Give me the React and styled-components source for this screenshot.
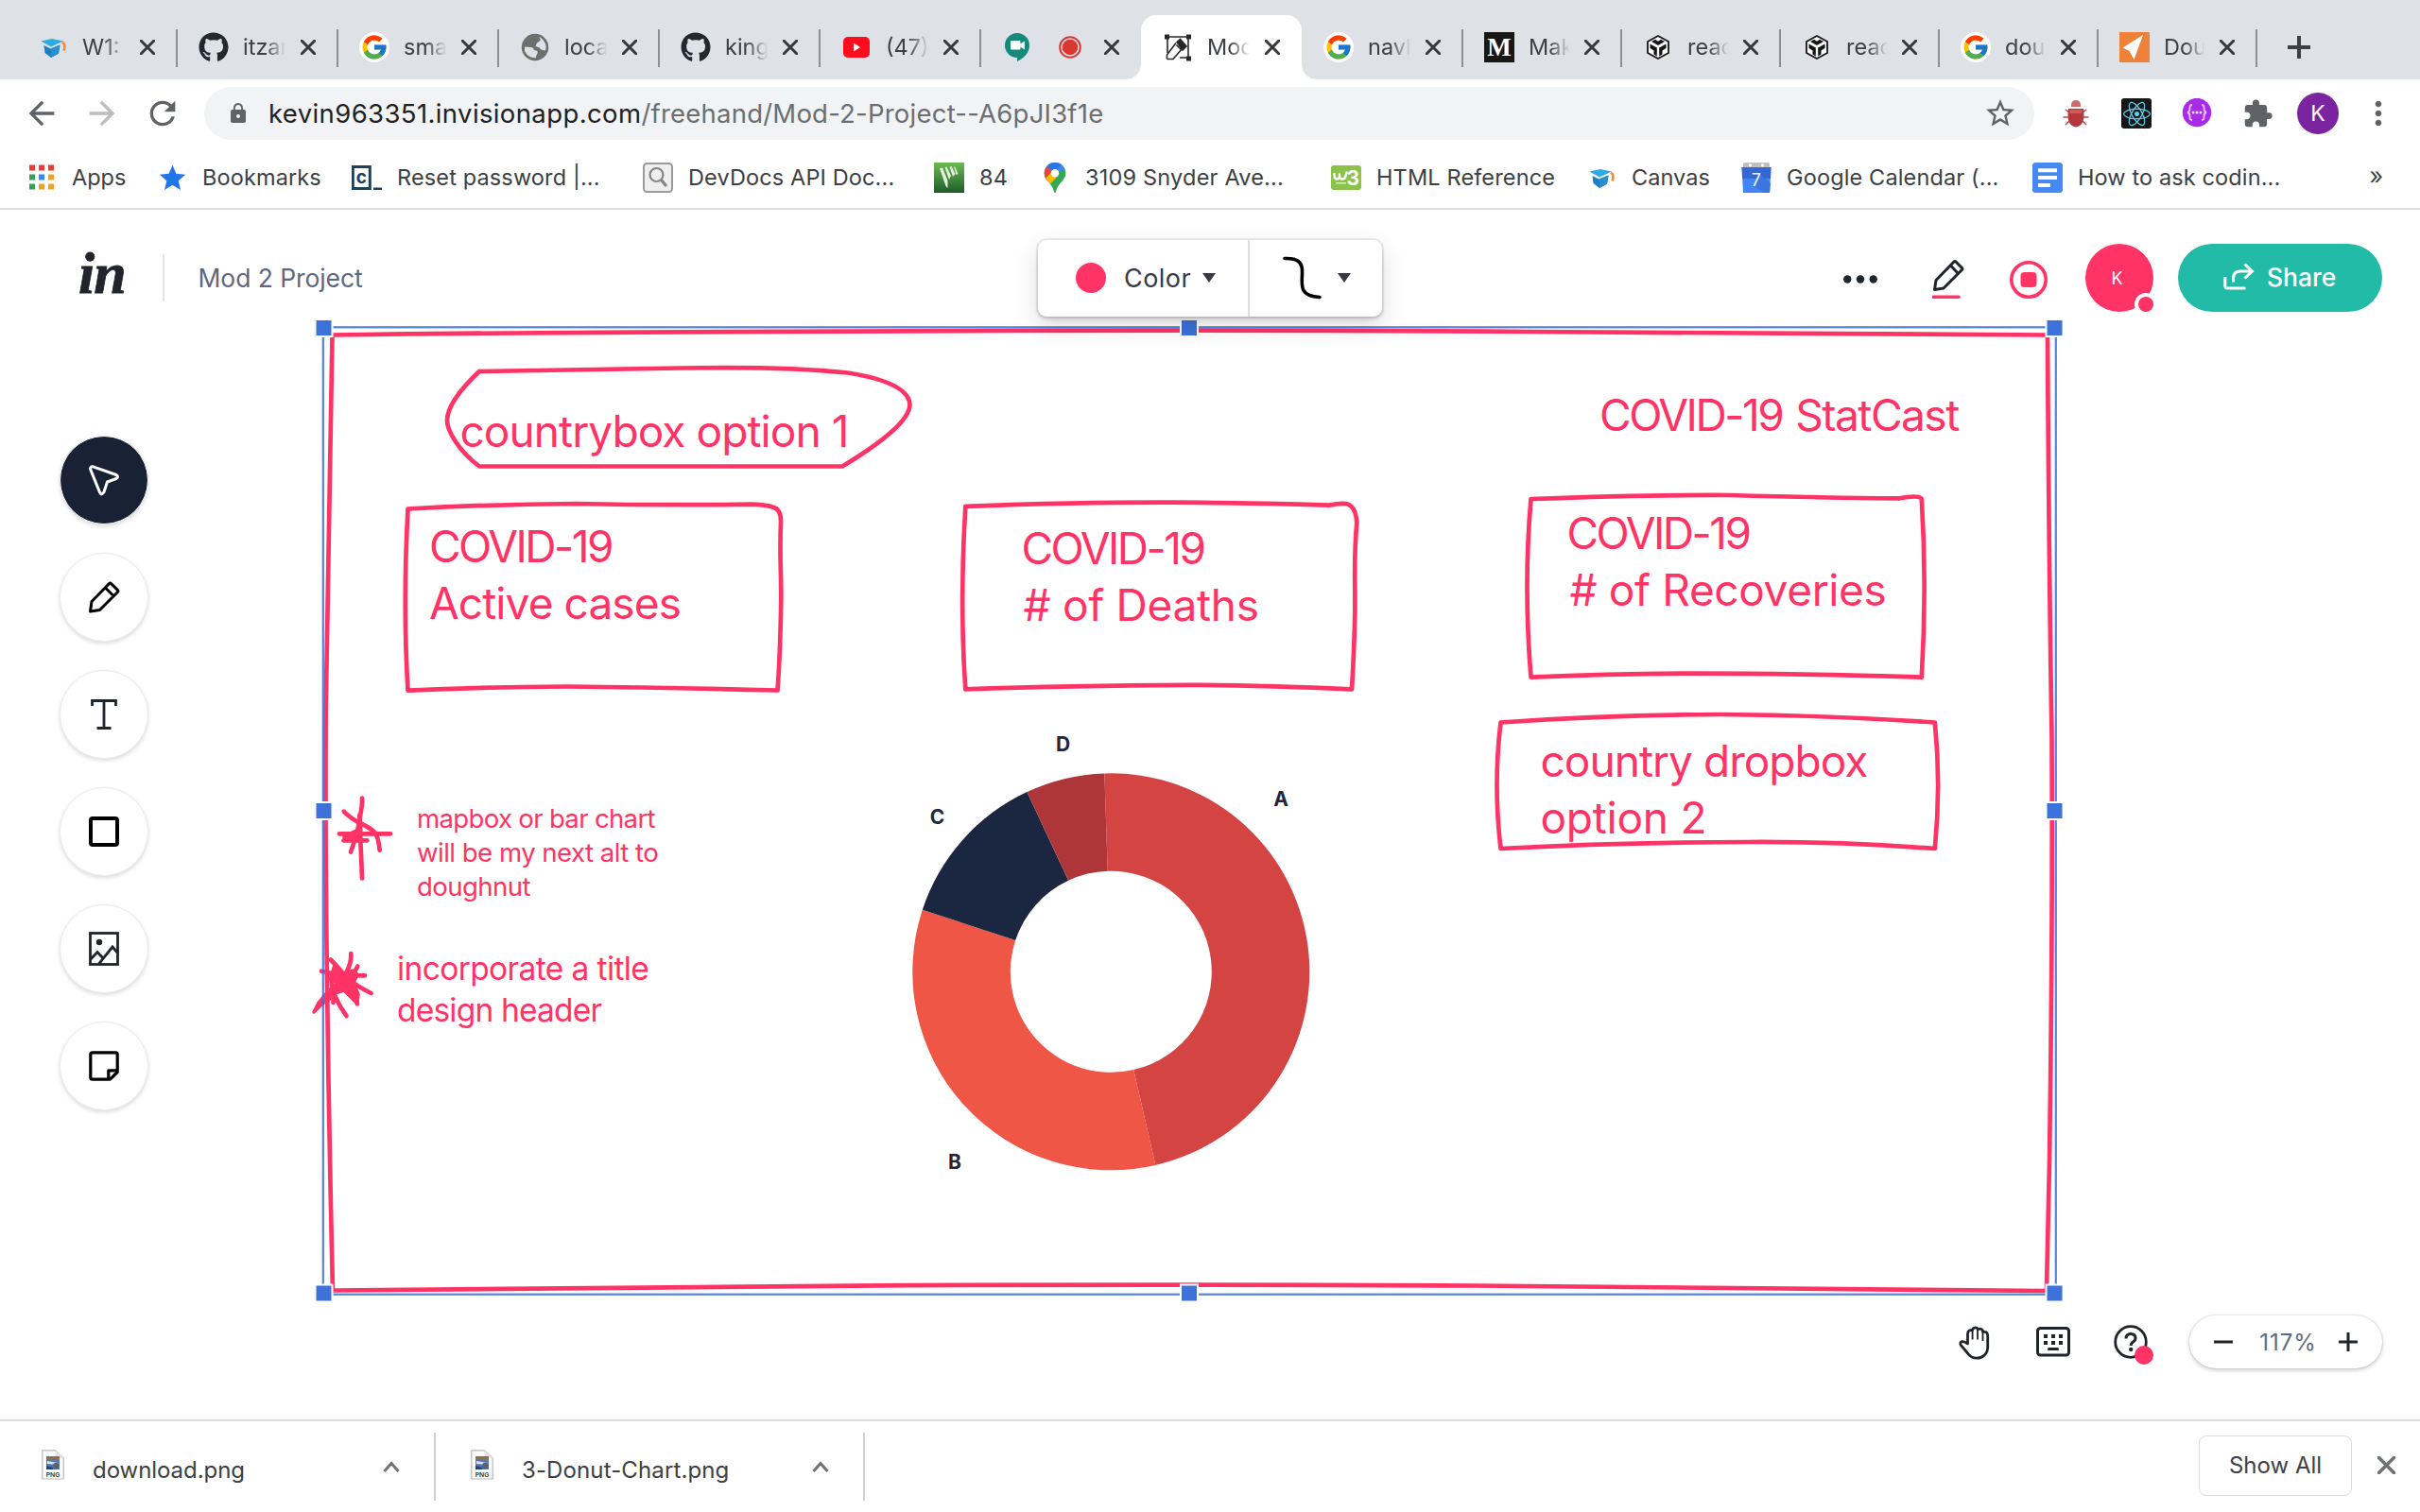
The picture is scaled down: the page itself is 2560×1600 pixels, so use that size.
import React from 'react';
import styled, { createGlobalStyle, css } from 'styled-components';
import {
  MdArrowBack, MdArrowForward, MdRefresh, MdLock, MdStarBorder, MdExtension, MdMoreVert, MdStar,
} from 'react-icons/md';
import { FaGithub, FaReact } from 'react-icons/fa';
import { FcGoogle } from 'react-icons/fc';

const PINK = '#ff3366';
const BLUE = '#3c72da';
const INK = '#20242c';

const GlobalStyle = createGlobalStyle`
  *, *::before, *::after { box-sizing: border-box; }
  body {
    margin: 0;
    background: #fff;
    font-family: "Inter", "Liberation Sans", sans-serif;
    color: #3c4043;
    overflow: hidden;
  }
  svg { display: block; flex: none; }
`;

const Window = styled.div`
  width: 2560px;
  height: 1600px;
  display: flex;
  flex-direction: column;
  background: #fff;
`;

/* ---------- tab strip ---------- */

const TabStrip = styled.div`
  height: 84px;
  padding: 16px 0 0 17px;
  display: flex;
  background: #dee1e6;
`;

const Tab = styled.div`
  position: relative;
  width: ${(p) => p.$width}px;
  padding: 0 23px 0 23px;
  display: flex;
  align-items: center;
  ${(p) => p.$divider && css`
    &::after {
      content: '';
      position: absolute;
      right: -1px;
      top: 15px;
      width: 2px;
      height: 40px;
      background: #8b8e93;
    }
  `}
  ${(p) => p.$active && css`
    background: #fff;
    border-radius: 16px 16px 0 0;
    &::before, &::after {
      content: '';
      position: absolute;
      bottom: 0;
      width: 16px;
      height: 16px;
    }
    &::before {
      left: -16px;
      background: radial-gradient(circle at 0 0, #dee1e6 15.5px, #fff 16px);
    }
    &::after {
      right: -16px;
      background: radial-gradient(circle at 100% 0, #dee1e6 15.5px, #fff 16px);
    }
  `}
`;

const IconSlot = styled.span`
  flex: none;
  width: ${(p) => p.$width || 32}px;
  height: 32px;
  display: flex;
  align-items: center;
  justify-content: center;
  color: ${(p) => p.$color || '#5f6368'};
`;

const TabTitle = styled.span`
  flex: 1;
  min-width: 0;
  margin: 0 16px 0 15px;
  overflow: hidden;
  white-space: nowrap;
  font-size: 23.5px;
  line-height: 32px;
  mask-image: linear-gradient(90deg, #000 52%, transparent 101%);
`;

const TabMedia = styled.span`
  flex: 1;
  padding-left: 28px;
`;

const NewTab = styled.div`
  width: 90px;
  display: flex;
  align-items: center;
  justify-content: center;
`;

const WhiteDisc = styled.span`
  width: 32px;
  height: 32px;
  border-radius: 50%;
  background: #fff;
  display: flex;
  align-items: center;
  justify-content: center;
`;

const BlackTile = styled.span`
  width: 32px;
  height: 32px;
  border-radius: ${(p) => p.$radius || 0}px;
  background: #181716;
  color: ${(p) => p.$color || '#fff'};
  font: bold 27px/32px "Liberation Serif", serif;
  display: flex;
  align-items: center;
  justify-content: center;
`;

/* ---------- toolbar ---------- */

const Toolbar = styled.div`
  height: 72px;
  padding: 0 28px;
  display: flex;
  align-items: center;
  gap: 32px;
`;

const AddressBar = styled.div`
  width: 1936px;
  height: 56px;
  margin: 0 -4px;
  padding: 0 18px 0 24px;
  border-radius: 28px;
  background: #f1f3f4;
  display: flex;
  align-items: center;
`;

const Url = styled.span`
  flex: 1;
  margin-left: 20px;
  font-size: 27.5px;
  line-height: 36px;
  letter-spacing: 0.22px;
  color: #6b6e72;
`;

const Domain = styled.span`
  letter-spacing: 0.38px;
  color: #202124;
`;

const Profile = styled.span`
  width: 44px;
  height: 44px;
  margin: 0 -6px;
  border-radius: 50%;
  background: #7a259f;
  color: #fff;
  font-size: 23px;
  line-height: 44px;
  text-align: center;
`;

/* ---------- bookmarks ---------- */

const BookmarkBar = styled.div`
  height: 66px;
  padding-left: 28px;
  border-bottom: 2px solid #dddee4;
  display: flex;
  align-items: center;
`;

const Bookmark = styled.div`
  width: ${(p) => p.$width}px;
  display: flex;
  align-items: center;
  gap: 16px;
  font-size: 23.5px;
  line-height: 32px;
  letter-spacing: ${(p) => p.$spacing}px;
  white-space: nowrap;
`;

const Overflow = styled.span`
  margin-left: auto;
  padding: 0 39px 4px 0;
  font-size: 25px;
`;

/* ---------- freehand app ---------- */

const Freehand = styled.main`
  position: relative;
  flex: 1;
  display: flex;
  flex-direction: column;
`;

const Board = styled.div`
  position: absolute;
  inset: 0;
`;

const Note = styled.div`
  position: absolute;
  left: ${(p) => p.$x}px;
  top: ${(p) => p.$y}px;
  font-size: ${(p) => p.$size}px;
  line-height: ${(p) => p.$leading}px;
  color: ${PINK};
  white-space: nowrap;
`;

const Line = styled.div`
  padding-left: ${(p) => p.$indent || 0}px;
`;

const Run = styled.span`
  letter-spacing: ${(p) => p.$spacing}px;
  white-space: pre;
`;

const Header = styled.header`
  position: relative;
  height: 144px;
  padding: 0 40px 0 83px;
  display: grid;
  grid-template-columns: 1fr auto 1fr;
  align-items: center;
`;

const Brand = styled.div`
  display: flex;
  align-items: center;
`;

const DocTitle = styled.span`
  margin-left: 35.5px;
  font-size: 26.5px;
  line-height: 36px;
  letter-spacing: -0.08px;
  color: #5f677f;
`;

const Rule = styled.span`
  width: 2px;
  height: 50px;
  margin-left: 38px;
  background: #e2e3e6;
`;

const StylePanel = styled.div`
  width: 364px;
  height: 81px;
  margin-right: 43px;
  border-radius: 9px;
  background: #fff;
  box-shadow: 0 0 0 2px rgba(0, 0, 0, 0.07), 0 3px 4px rgba(0, 0, 0, 0.12), 0 10px 26px rgba(0, 0, 0, 0.15);
  display: flex;
`;

const StyleOption = styled.div`
  width: ${(p) => p.$width}px;
  padding-left: ${(p) => p.$pad}px;
  display: flex;
  align-items: center;
  font-size: 27px;
  letter-spacing: 0.46px;
  color: #363a45;
  & + & { border-left: 2px solid #dddfe5; }
`;

const Swatch = styled.span`
  width: 32px;
  height: 32px;
  margin-right: 19px;
  border-radius: 50%;
  background: ${PINK};
`;

const Caret = styled.span`
  margin-left: ${(p) => p.$gap}px;
  border: 7px solid transparent;
  border-top: 10px solid #363a45;
  border-bottom: 0;
`;

const Actions = styled.div`
  display: flex;
  align-items: center;
  justify-content: flex-end;
`;

const Action = styled.span`
  margin-right: ${(p) => p.$gap}px;
`;

const Avatar = styled.span`
  position: relative;
  width: 72px;
  height: 72px;
  margin-right: 26px;
  border-radius: 50%;
  background: ${PINK};
  color: #fff;
  font-size: 18px;
  line-height: 73px;
  text-align: center;
  padding-right: 5px;
  &::after {
    content: '';
    position: absolute;
    right: 0;
    bottom: 0;
    width: 16px;
    height: 16px;
    border-radius: 50%;
    background: ${PINK};
    box-shadow: 0 0 0 4px #fff;
  }
`;

const ShareButton = styled.button`
  width: 216px;
  height: 72px;
  padding: 0 0 3px 48px;
  border: 0;
  border-radius: 36px;
  background: #22bba7;
  color: #fff;
  font: 500 26.5px "Inter", sans-serif;
  display: flex;
  align-items: center;
  gap: 13px;
`;

const ToolRail = styled.nav`
  position: relative;
  flex: 1;
  padding: 95px 0 0 63px;
  display: flex;
  flex-direction: column;
  align-items: flex-start;
  gap: 30px;
`;

const Tool = styled.button`
  width: 94px;
  height: 94px;
  padding: 0;
  border: 1px solid ${(p) => (p.$active ? '#fff' : '#ebebeb')};
  border-radius: 50%;
  background: ${(p) => (p.$active ? '#182234' : '#fff')};
  box-shadow: 0 2px 4px rgba(0, 0, 0, 0.14);
  display: flex;
  align-items: center;
  justify-content: center;
`;

const Footer = styled.div`
  position: relative;
  height: 164px;
  padding-right: 40px;
  display: flex;
  align-items: center;
  justify-content: flex-end;
`;

const ZoomPill = styled.div`
  width: 204px;
  height: 56px;
  padding: 0 26px;
  border-radius: 28px;
  background: #fff;
  box-shadow: 0 0 2px rgba(0, 0, 0, 0.22), 0 2px 5px rgba(0, 0, 0, 0.2);
  display: flex;
  align-items: center;
  justify-content: space-between;
  font-size: 24px;
  letter-spacing: 0.9px;
  color: #626a80;
`;

const ZoomLevel = styled.span`
  padding-left: 5px;
`;

/* ---------- downloads ---------- */

const Shelf = styled.div`
  height: 98px;
  border-top: 2px solid #dddee1;
  padding: 0 26px 0 0;
  display: flex;
  align-items: center;
`;

const Download = styled.div`
  width: ${(p) => p.$width}px;
  height: 72px;
  padding: 0 36px 0 ${(p) => p.$pad}px;
  border-right: 2px solid #d0d1d3;
  display: flex;
  align-items: center;
`;

const FileIcon = styled.span`
  padding-bottom: 5px;
`;

const FileName = styled.span`
  flex: 1;
  padding: 6px 0 0 30px;
  font-size: 24px;
  letter-spacing: ${(p) => p.$spacing}px;
`;

const ShowAll = styled.button`
  width: 162px;
  height: 64px;
  margin: 0 27px 2px auto;
  padding: 0 0 2px;
  border: 1.5px solid #d9dbdf;
  border-radius: 8px;
  background: #fff;
  color: #3c4043;
  font: 24px "Inter", sans-serif;
`;

const CloseShelf = styled.span`
  padding-bottom: 3px;
`;

/* ---------- icons ---------- */

const Cross = ({ size = 16, color = '#35383c', weight = 3 }) => (
  <svg width={size} height={size} viewBox="0 0 16 16" stroke={color} strokeWidth={weight * 16 / size} strokeLinecap="round">
    <path d="M1.3 1.3 14.7 14.7M14.7 1.3 1.3 14.7" />
  </svg>
);

const CanvasHat = () => (
  <svg width="32" height="32" viewBox="0 0 32 32">
    <path d="M6.500 14 13.500 17.500 23.500 13.500 22 22.500 14 27 7.500 22Z" fill="#1b7fc6" />
    <path d="M14 17.500 23.500 13.500 22 22.500 14 27Z" fill="#2a8fd2" />
    <path d="M3.300 9.500 15 7 27 9.500 14 15.500Z" fill="#2babe2" />
    <path d="M26 10.500Q30 13.500 27.500 19.500" fill="none" stroke="#f08a3c" strokeWidth="2.600" />
  </svg>
);

const GoogleBadge = () => <WhiteDisc><FcGoogle size={30} /></WhiteDisc>;

const Globe = () => (
  <svg width="32" height="32" viewBox="0 0 32 32">
    <circle cx="16" cy="16" r="14.200" fill="#6e6e6e" />
    <path d="M5 15.500 12 16Q14.500 16.500 15 19L18.500 20Q19.500 22.500 17.500 24.500L16.500 27.500Q8 27 5 20Z" fill="#dee1e6" />
    <path d="M19.500 4.800Q22 6 21.500 9L18 11.500 16.500 15 20 16 22.500 18.500 27 19.500Q28.500 14 26 10.500Q23.500 6 19.500 4.800Z" fill="#dee1e6" />
  </svg>
);

const YouTube = () => (
  <svg width="32" height="32" viewBox="0 0 32 32">
    <rect x="2" y="5" width="28" height="22" rx="5" fill="#fe0b1d" />
    <path d="M13 11.500 20 16 13 20.500Z" fill="#fff" />
  </svg>
);

const Meet = () => (
  <svg width="32" height="32" viewBox="0 0 32 32">
    <path d="M16 1a13 13 0 0 1 13 13c0 8-6 13.500-13 17v-4A13 13 0 0 1 16 1Z" fill="#16897b" />
    <rect x="9" y="9" width="10.500" height="9.500" rx="1" fill="#fff" />
    <path d="M19 12.500 24 9.500V18.500L19 15.500Z" fill="#e6f2f0" />
  </svg>
);

const RecordingDot = () => (
  <svg width="24" height="24" viewBox="0 0 24 24">
    <circle cx="12" cy="12" r="10.800" fill="none" stroke="#d93831" strokeWidth="2" />
    <circle cx="12" cy="12" r="8.300" fill="#d93831" />
  </svg>
);

const FreehandFavicon = () => (
  <svg width="32" height="32" viewBox="0 0 32 32" fill="none" stroke="#26282b" strokeWidth="1.600">
    <path d="M5 5H27V27H18M5 5V22" />
    <path d="M4.500 28.500V24L14 11.500M4.500 28.500H11L20.500 17.500M14.500 13.500 19.500 18.500" />
    <path d="M15 10.500 18.500 7.500 25 15 21 19Z" fill="#26282b" />
    <g fill="#26282b" stroke="none">
      <rect x="2" y="2.500" width="5" height="5" /><rect x="25" y="2.500" width="5" height="5" />
      <rect x="25" y="25.500" width="5" height="5" />
    </g>
  </svg>
);

const Cube = () => (
  <svg width="32" height="32" viewBox="0 0 32 32">
    <path d="M16 4 27 10V22L16 28 5 22V10Z" fill="#fff" stroke="#151515" strokeWidth="1.800" />
    <path d="M7.500 12.500 14.800 16.500V25.500L11.500 23.500V19.500L7.500 17Z M24.500 12.500 17.200 16.500V25.500L20.500 23.500V19.500L24.500 17Z M9 10 13 7.700 16 9.700 19 7.700 23 10 16 14Z" fill="#151515" />
  </svg>
);

const OrangeArrow = () => (
  <svg width="32" height="32" viewBox="0 0 32 32">
    <rect width="32" height="32" rx="1" fill="#ee8138" />
    <path d="M25 3 3.500 16.500 10.500 20 15.500 29Z" fill="#fff" />
  </svg>
);

const Plus = ({ size = 24, weight = 3, color = '#3c4043' }) => (
  <svg width={size} height={size} viewBox="0 0 24 24" stroke={color} strokeWidth={weight * 24 / size} strokeLinecap="butt">
    <path d="M12 0V24M0 12H24" />
  </svg>
);

const Bug = () => (
  <svg width="32" height="32" viewBox="0 0 32 32">
    <g fill="none" stroke="#b5484a" strokeWidth="1.500">
      <path d="M9 15 5 12M9 20H2.500M9 24 5 28M23 15 27 12M23 20H29.500M23 24 27 28" />
    </g>
    <path d="M11 9Q10.500 2 16 2Q21.500 2 21 9Z" fill="#cf6a6a" />
    <path d="M8 11H24Q26.500 29 16 30.500Q5.500 29 8 11Z" fill="#b3373b" />
    <path d="M9.500 12H22.500V16H9.500Z" fill="#cb5a5b" />
  </svg>
);

const Braces = () => (
  <svg width="32" height="32" viewBox="0 0 32 32">
    <circle cx="16" cy="15" r="15.200" fill="#a92ae8" />
    <g fill="none" stroke="#e9c8fa" strokeWidth="1.800">
      <path d="M11 7Q8 7 8.500 11Q8.500 14.500 6 15Q8.500 15.500 8.500 19Q8 23 11 23M21 7Q24 7 23.500 11Q23.500 14.500 26 15Q23.500 15.500 23.500 19Q24 23 21 23" />
    </g>
    <g fill="#f6e8fd"><circle cx="12" cy="15" r="1.500" /><circle cx="16" cy="15" r="1.500" /><circle cx="20" cy="15" r="1.500" /></g>
  </svg>
);

const AppsGrid = () => {
  const colors = ['#f23a34', '#f23a34', '#f23a34', '#34a058', '#2a8bf2', '#f0a127', '#34a058', '#f0a127', '#f0a127'];
  return (
    <svg width="32" height="32" viewBox="0 0 32 32">
      {colors.map((c, i) => <rect key={i} x={3 + (i % 3) * 10} y={2.500 + Math.floor(i / 3) * 10} width="6" height="6" fill={c} />)}
    </svg>
  );
};

const Codecademy = () => (
  <svg width="32" height="32" viewBox="0 0 32 32">
    <rect x="1.300" y="4.500" width="18" height="23" fill="none" stroke="#1f4056" strokeWidth="3" />
    <text x="10.300" y="22" fontSize="19" fontWeight="700" textAnchor="middle" fill="#1f4056">c</text>
    <rect x="23" y="26.500" width="9" height="2.500" fill="#1f4056" />
  </svg>
);

const Magnifier = () => (
  <svg width="32" height="32" viewBox="0 0 32 32" fill="none">
    <rect x="1" y="1" width="30" height="30" rx="3.500" fill="#efefef" stroke="#9a9a9a" strokeWidth="2" />
    <circle cx="14.500" cy="13" r="7" stroke="#858585" strokeWidth="2.200" />
    <path d="M19.500 18.500 25 25" stroke="#858585" strokeWidth="3.200" />
  </svg>
);

const GreenTile = () => (
  <svg width="32" height="32" viewBox="0 0 32 32">
    <defs><linearGradient id="leaf" x2="0" y2="1"><stop stopColor="#6cbb50" /><stop offset="1" stopColor="#1d5c2c" /></linearGradient></defs>
    <rect width="32" height="32" fill="url(#leaf)" />
    <path d="M6 6 9 5.500 14.500 19V27L12.500 25ZM11.500 5 13.500 4.500 18 14 16 18ZM16.500 4.500 18.500 4 22.500 12 20 15ZM21 4 22.500 5 25.500 12 23.500 13Z" fill="#e3f0dc" />
  </svg>
);

const MapsPin = () => (
  <svg width="32" height="32" viewBox="0 0 32 32">
    <defs><clipPath id="pin"><path d="M16 0A11.300 11.300 0 0 1 27.300 11.300C27.300 19 19 21.500 16.900 31.300Q16 33 15.100 31.300C13 21.500 4.700 19 4.700 11.300A11.300 11.300 0 0 1 16 0Z" /></clipPath></defs>
    <g clipPath="url(#pin)">
      <rect width="32" height="32" fill="#34a853" />
      <path d="M0 0H32V6L16 11 4 0Z" fill="#4285f4" />
      <path d="M12 0 24 0 16 11 6 4Z" fill="#2a74e6" />
      <path d="M0 0 7 4 16 11 3 24Z" fill="#ea4335" />
      <path d="M4 19 13 9 19 14 9 25Z" fill="#fbbc04" />
    </g>
    <circle cx="16" cy="11.300" r="4.200" fill="#fff" />
  </svg>
);

const W3 = () => (
  <svg width="32" height="32" viewBox="0 0 32 32">
    <rect y="3" width="32" height="26" rx="3" fill="#8bc34a" />
    <path d="M3.500 11V14Q3.500 17.500 6.300 17.500Q9 17.500 9 14V11.500V14Q9 17.500 12 17.500Q15 17.500 15.500 14L17 9.500" fill="none" stroke="#fff" strokeWidth="2.400" />
    <text x="16.500" y="24" fontSize="21" fontWeight="700" fill="#fff">3</text>
    <rect x="5" y="21" width="11" height="1.600" fill="#d9ecc3" />
  </svg>
);

const Calendar = () => (
  <svg width="32" height="32" viewBox="0 0 32 32">
    <rect x="2" y="0" width="28" height="9" rx="2" fill="#bfc0c2" />
    <circle cx="9.500" cy="2.800" r="1.600" fill="#fff" /><circle cx="22.500" cy="2.800" r="1.600" fill="#fff" />
    <path d="M.5 5H31.500L30 32H2Z" fill="#4285f4" />
    <path d="M.5 5H31.500L31 17H1.200Z" fill="#3367d6" />
    <path d="M20 13 31 22 30 32H24L13 25Z" fill="#3a75e0" />
    <text x="16" y="25" fontSize="18" textAnchor="middle" fill="#f3f6fd">7</text>
  </svg>
);

const DocIcon = () => (
  <svg width="32" height="32" viewBox="0 0 32 32">
    <rect width="32" height="32" rx="3.500" fill="#4688f4" />
    <path d="M6 6.200H26V10.200H6ZM6 14H26V18H6ZM6 22H19V26H6Z" fill="#fff" />
  </svg>
);

const Logo = styled.span`
  width: 51px;
  height: 44px;
  font: italic bold 62px/35px "Liberation Serif", serif;
  letter-spacing: -1px;
  -webkit-text-stroke: 0.8px ${INK};
  color: ${INK};
`;

const Pencil = ({ color = INK, size = 34 }) => (
  <svg width={size} height={size} viewBox="0 0 34 34" fill="none" stroke={color} strokeWidth="3" strokeLinejoin="round">
    <path d="M2.500 32 4 21.500 22.500 2.500Q23.500 1.500 24.500 2.500L31.500 9.500Q32.500 10.500 31.500 11.500L12.500 30.500ZM18.500 7 27 15.500" />
  </svg>
);

const PencilUnderlined = () => (
  <svg width="34" height="44" viewBox="0 0 34 44" fill="none" stroke={INK} strokeWidth="3" strokeLinejoin="round">
    <path d="M2.500 34.500 4 24.500 23 5Q24 4 25 5L31.500 11.500Q32.500 12.500 31.500 13.500L12 33ZM19.500 9 27.500 17.500" />
    <path d="M1 42.200H28" stroke={PINK} strokeWidth="3.500" strokeLinecap="round" />
  </svg>
);

const MoreDots = () => (
  <svg width="36" height="12" viewBox="0 0 36 12" fill={INK}>
    <circle cx="4.300" cy="7.500" r="4.200" /><circle cx="18" cy="7.500" r="4.200" /><circle cx="31.700" cy="7.500" r="4.200" />
  </svg>
);

const RecordButton = () => (
  <svg width="40" height="44" viewBox="0 -4 40 44">
    <circle cx="20" cy="20" r="18.200" fill="none" stroke={PINK} strokeWidth="3.600" />
    <rect x="11.500" y="12" width="17" height="16" rx="4" fill={PINK} />
  </svg>
);

const ShareIcon = () => (
  <svg width="33" height="29" viewBox="0 0 33 29" fill="none" stroke="#fff" strokeWidth="3">
    <path d="M1.800 15V24.500Q1.800 27 4.300 27H23.500M10.500 20.500V16.500Q10.500 9 18 9H30M22.500 1.500 30.500 9 22.500 16.500" />
  </svg>
);

const CursorIcon = () => (
  <svg width="34" height="34" viewBox="0 0 34 34" fill="none" stroke="#fff" strokeWidth="3" strokeLinejoin="round">
    <path d="M5.500 2.800 30 11.500Q33 13.500 30 15.500L20.500 19 17 29.500Q14.500 34 12.500 30L2.800 6Q2 2.300 5.500 2.800Z" />
  </svg>
);

const TypeIcon = () => (
  <svg width="28" height="32" viewBox="0 0 28 32" fill="none" stroke={INK} strokeWidth="2.800">
    <path d="M1.500 7V1.500H26.500V7M14 1.500V30.500M6.500 30.500H21.500" />
  </svg>
);

const SquareIcon = () => (
  <svg width="32" height="32" viewBox="0 0 32 32">
    <rect x="2" y="2" width="28" height="28" rx="2" fill="none" stroke="#000" strokeWidth="4" />
  </svg>
);

const ImageIcon = () => (
  <svg width="32" height="36" viewBox="0 0 32 36" fill="none" stroke={INK} strokeWidth="2.800">
    <rect x="1.500" y="1.500" width="29" height="33" />
    <circle cx="11" cy="11" r="3.200" fill={INK} stroke="none" />
    <path d="M2 29 9 21.500 15 28M10.500 34 25 16 30.500 22.500" />
  </svg>
);

const StickyIcon = () => (
  <svg width="32" height="32" viewBox="0 0 32 32" fill="none" stroke="#000" strokeWidth="3.200" strokeLinejoin="round">
    <path d="M1.800 3.800Q1.800 1.800 3.800 1.800H28.200Q30.200 1.800 30.200 3.800V22.500L22.500 30.200H3.800Q1.800 30.200 1.800 28.200ZM30 20.800H20.800V30" />
  </svg>
);

const HandIcon = () => (
  <svg width="33" height="37" viewBox="0 0 33 37" fill="none" stroke={INK} strokeWidth="2.800" strokeLinejoin="round">
    <path d="M9.500 20V9.500C9.500 6 12 5 14.200 6C14.700 2.500 19 2 20.500 4.700C23 3.400 25.500 4.500 25.700 7.500C28.500 6.800 30.700 8 30.700 11.500V23.500C30.700 30.500 25.500 35.200 19 35.200C14.500 35.200 11.500 33 9.500 30L2.300 21.300C1.200 19.500 2 18 3.500 17.600C5.500 17.200 7.500 18.500 9.500 20Z" />
    <path d="M14.600 6V15.500M20 5V15.500M25.500 7V17" strokeWidth="1.800" />
  </svg>
);

const KeyboardIcon = () => (
  <svg width="36" height="32" viewBox="0 0 36 32">
    <rect x="1.500" y="1.500" width="33" height="28.500" rx="3" fill="none" stroke={INK} strokeWidth="3" />
    <g fill={INK}>
      {[8, 16, 24].map((x) => <React.Fragment key={x}><rect x={x} y="8" width="4" height="4" /><rect x={x} y="15" width="4" height="4" /></React.Fragment>)}
      <rect x="12" y="22" width="12" height="3" rx="1.500" />
    </g>
  </svg>
);

const HelpIcon = () => (
  <svg width="36" height="36" viewBox="0 0 36 36" overflow="visible">
    <circle cx="18" cy="18" r="16.300" fill="none" stroke={INK} strokeWidth="2.800" />
    <path d="M13 14.500Q13 9.500 18 9.500Q23 9.500 23 14Q23 16.500 20.500 18Q18.200 19.300 18.200 22" fill="none" stroke={INK} strokeWidth="3" />
    <circle cx="18.200" cy="26" r="2.200" fill={INK} />
    <circle cx="32" cy="32" r="10" fill={PINK} />
  </svg>
);

const StrokeStyle = () => (
  <svg width="44" height="48" viewBox="0 0 44 48" fill="none" stroke="#000" strokeWidth="3.600" strokeLinecap="round">
    <path d="M3 3.500C16 3 22.500 6.500 21.500 20C20.500 34 20 43.500 40 44.500" />
  </svg>
);

const Minus = () => (
  <svg width="20" height="4" viewBox="0 0 20 4"><rect y=".5" width="20" height="3" fill={INK} /></svg>
);

const Chevron = () => (
  <svg width="18" height="12" viewBox="0 0 18 12" fill="none" stroke="#6f7275" strokeWidth="3">
    <path d="M1.500 11 9 2.500 16.500 11" />
  </svg>
);

const PngFile = () => (
  <svg width="24" height="32" viewBox="0 0 24 32">
    <path d="M.8.8H14.500L23.200 9V31H.8Z" fill="#fcfcfc" stroke="#b9b9b9" strokeWidth="1.200" />
    <path d="M14.500.8V9H23.200Z" fill="#e4e4e4" />
    <rect x="5" y="7" width="14" height="14" fill="#4f78b8" />
    <path d="M5 7H19V10.500H5Z" fill="#8f7048" />
    <path d="M6 12 18 14V16L6 15Z" fill="#d5e4f7" />
    <path d="M5 17 12 19V21H5Z" fill="#24427c" />
    <circle cx="15.500" cy="17" r="3.300" fill="#5d6168" />
    <text x="12" y="29" fontSize="6.800" fontWeight="600" textAnchor="middle" fill="#333">PNG</text>
  </svg>
);

/* ---------- board drawing ---------- */

const slices = [
  { from: -1.9, to: 167.05, color: '#d44443' },
  { from: 167.05, to: 288.2, color: '#ef5646' },
  { from: 288.2, to: 334.95, color: '#1b2640' },
  { from: 334.95, to: 358.1, color: '#ae3538' },
];

const slicePath = ({ from, to }) => {
  const cx = 1175.3, cy = 1028.3, R = 210, r = 106.5;
  const at = (deg, rad) => {
    const a = (deg * Math.PI) / 180;
    return `${(cx + rad * Math.sin(a)).toFixed(2)} ${(cy - rad * Math.cos(a)).toFixed(2)}`;
  };
  const large = to - from > 180 ? 1 : 0;
  return `M${at(from, R)}A${R} ${R} 0 ${large} 1 ${at(to, R)}L${at(to, r)}A${r} ${r} 0 ${large} 0 ${at(from, r)}Z`;
};

const sketchStrokes = [
  // outer frame
  'M351.500 355Q347 620 344.700 750Q344 880 345.500 1000Q347.500 1180 352 1365.500',
  'M352 354.500Q620 351 900 350.700Q1300 348.500 1620 351Q1900 352 2166 354.500',
  'M2166 355Q2167.500 600 2170.500 780Q2171.500 1000 2168 1230Q2166.500 1300 2165 1364',
  'M353 1365.500Q660 1361.500 960 1360.200Q1260 1358.800 1560 1360.500Q1850 1362 2164 1366',
  // circled label
  'M507 393Q640 391 720 389.500Q830 387.500 897 394.500Q962.500 405 962.500 429C961 446 930 470 891 493.500H507C484 476 473 455 473 445C473 429 489 410 507 393',
  // active cases
  'M431.500 538.500Q520 533.500 610 533Q700 535 796 533.700Q812 534.500 818 536.700Q826.500 539 826 553C824.500 590 826.500 605 826.300 633Q825.500 690 822.500 730.500Q700 727.500 600 726.500Q510 727 431.500 730.700Q426 640 431.500 538.500Z',
  // deaths
  'M1021.300 535.800Q1140 531.500 1240 531.700Q1330 532 1406 534.600Q1416 532.500 1423 533Q1434 534 1435.300 553C1432 590 1433.500 600 1433.400 645Q1432.500 690 1430 729.300Q1340 725.500 1260 724.800Q1130 725.500 1021.300 729.300Q1015 640 1021.300 535.800Z',
  // recoveries
  'M1619.500 528Q1740 523.500 1830 524Q1930 527 2009.700 527.300Q2030 523.500 2032.800 528Q2038.500 620 2032.800 716.600Q1900 712.500 1785 712.600Q1700 713 1619.500 716.600Q1611.500 620 1619.500 528Z',
  // dropbox
  'M1587.500 764.500Q1700 756.500 1820 756Q1940 757 2046.800 764.500Q2053.500 830 2046.800 898Q1950 890.500 1850 891Q1710 891.500 1587.500 898Q1579.500 830 1587.500 764.500Z',
];

const starStrokes = [
  'M383 844.500Q383.500 852 380.500 866Q379 880 371 901.500',
  'M380.500 862 381 880 383 929.500',
  'M359 882.300H413',
  'M363.500 889.300H388.300',
  'M363.800 858.700Q367 863 378.500 870Q390 875 395 879.500Q400 883 401.700 899.700',
  'M364.500 885.500 381 878 378 887Z',
  'M371.300 1009Q372 1022 363 1034',
  'M378.300 1022.500 371 1036',
  'M386 1032.300Q360 1032.500 340 1027.700',
  'M349.800 1015.500Q360 1026 366 1034Q378 1044 392.500 1051',
  'M350 1034Q351 1054 366.500 1075',
  'M352.500 1061 354 1046',
  'M378 1062.500Q377 1052 366 1036',
];

const handles = [
  [342.5, 347], [1258, 347], [2173.5, 347], [342.5, 858], [2173.5, 858],
  [342.5, 1368.500], [1258, 1368.500], [2173.5, 1368.500],
];

const BoardDrawing = () => (
  <svg width="2560" height="1280" viewBox="0 222 2560 1280">
    {slices.map((s) => <path key={s.color} d={slicePath(s)} fill={s.color} />)}
    <g fill="none" stroke={PINK} strokeWidth="4.700" strokeLinejoin="round" strokeLinecap="round">
      {sketchStrokes.map((d) => <path key={d} d={d} />)}
      {starStrokes.map((d) => <path key={d} d={d} />)}
      <path
        d="M354 1021 363 1031 373 1027 378 1031 374 1040 379 1052 378 1062 364 1048 355 1051 349 1057 341 1062 332 1071 337 1061 347 1049 356 1041 350 1034Z"
        fill={PINK}
        strokeWidth="3.400"
      />
    </g>
    <rect x="341.800" y="346.300" width="1833" height="1023.400" fill="none" stroke={BLUE} strokeOpacity=".88" strokeWidth="2.200" />
    {handles.map(([x, y]) => (
      <rect key={`${x}-${y}`} x={x - 9} y={y - 9} width="18" height="18" fill={BLUE} stroke="#fff" strokeWidth="2" />
    ))}
    <g fill="#1b2640" fontSize="21" fontWeight="700" textAnchor="middle">
      <text x="1355" y="853">A</text>
      <text x="1010" y="1237">B</text>
      <text x="991.500" y="871.500">C</text>
      <text x="1124.500" y="794.500">D</text>
    </g>
  </svg>
);

/* ---------- content ---------- */

const tabs = [
  { title: 'W1:', icon: <CanvasHat />, width: 170, divider: true },
  { title: 'itzam', icon: <FaGithub size={32} color="#24292e" />, width: 170, divider: true },
  { title: 'sma', icon: <GoogleBadge />, width: 170, divider: true },
  { title: 'loca', icon: <Globe />, width: 170, divider: true },
  { title: 'king', icon: <FaGithub size={32} color="#24292e" />, width: 170, divider: true },
  { title: '(47)', icon: <YouTube />, width: 170, divider: true },
  { media: true, icon: <Meet />, width: 170 },
  { title: 'Mod', icon: <FreehandFavicon />, width: 170, active: true },
  { title: 'navb', icon: <GoogleBadge />, width: 170, divider: true },
  { title: 'Mak', icon: <BlackTile>M</BlackTile>, width: 168, divider: true },
  { title: 'reac', icon: <Cube />, width: 168, divider: true },
  { title: 'reac', icon: <Cube />, width: 168, divider: true },
  { title: 'dou', icon: <GoogleBadge />, width: 168, divider: true },
  { title: 'Dou', icon: <OrangeArrow />, width: 168, divider: true },
];

const bookmarks = [
  { label: 'Apps', icon: <AppsGrid />, width: 138, spacing: 0 },
  { label: 'Bookmarks', icon: <MdStar size={33} color="#2076e8" />, width: 206, spacing: 0.12 },
  { label: 'Reset password |...', icon: <Codecademy />, width: 308, spacing: 0.14 },
  { label: 'DevDocs API Doc...', icon: <Magnifier />, width: 308, spacing: 0.13 },
  { label: '84', icon: <GreenTile />, width: 112, spacing: 0.3 },
  { label: '3109 Snyder Ave...', icon: <MapsPin />, width: 308, spacing: 0.2 },
  { label: 'HTML Reference', icon: <W3 />, width: 270, spacing: 0.14 },
  { label: 'Canvas', icon: <CanvasHat />, width: 164, spacing: 0.05 },
  { label: 'Google Calendar (...', icon: <Calendar />, width: 308, spacing: 0.14 },
  { label: 'How to ask codin...', icon: <DocIcon />, width: 280, spacing: 0.12 },
];

// Each line is a list of [text, letter spacing] runs.
const notes = [
  { x: 486.5, y: 203.5, size: 46, leading: 60, lines: [{ runs: [['countrybox option 1', -0.92]] }] },
  { x: 454, y: 326, size: 46, leading: 60, lines: [{ runs: [['COVID-19', -2.5]] }, { runs: [['Active cases', -0.9]] }] },
  { x: 1080.5, y: 328, size: 46, leading: 60, lines: [{ runs: [['COVID-19', -2.5]] }, { indent: 2, runs: [['# of Deaths', -0.3]] }] },
  { x: 1657.5, y: 311.5, size: 46, leading: 60, lines: [{ runs: [['COVID-19', -2.5]] }, { indent: 3, runs: [['# of Recoveries', -0.36]] }] },
  { x: 1692, y: 187, size: 46, leading: 60, lines: [{ runs: [['COVID-19', -2.45], [' ', 1], ['StatCast', -1.5]] }] },
  { x: 1629.5, y: 553.3, size: 46, leading: 60, lines: [{ runs: [['country dropbox', -0.96]] }, { runs: [['option 2', -0.23]] }] },
  { x: 441, y: 625.5, size: 27.6, leading: 36.3, lines: [{ runs: [['mapbox or bar chart', -0.7]] }, { runs: [['will be my next alt to', -0.53]] }, { runs: [['doughnut', -0.6]] }] },
  { x: 420, y: 780.5, size: 33.5, leading: 44, lines: [{ runs: [['incorporate a title', -0.61]] }, { runs: [['design header', -0.8]] }] },
];

const tools = [<CursorIcon />, <Pencil color="#000" />, <TypeIcon />, <SquareIcon />, <ImageIcon />, <StickyIcon />];

export default function App() {
  return (
    <>
      <GlobalStyle />
      <Window>
        <TabStrip>
          {tabs.map((t, i) => (
            <Tab key={i} $width={t.width} $divider={t.divider} $active={t.active}>
              <IconSlot>{t.icon}</IconSlot>
              {t.media ? <TabMedia><RecordingDot /></TabMedia> : <TabTitle>{t.title}</TabTitle>}
              <Cross />
            </Tab>
          ))}
          <NewTab><Plus size={24} weight={4} /></NewTab>
        </TabStrip>

        <Toolbar>
          <IconSlot><MdArrowBack size={40} /></IconSlot>
          <IconSlot $color="#bbbdc0"><MdArrowForward size={40} /></IconSlot>
          <IconSlot><MdRefresh size={40} /></IconSlot>
          <AddressBar>
            <MdLock size={24} color="#5f6368" />
            <Url><Domain>kevin963351.invisionapp.com</Domain>/freehand/Mod-2-Project--A6pJI3f1e</Url>
            <MdStarBorder size={36} color="#5f6368" />
          </AddressBar>
          <IconSlot><Bug /></IconSlot>
          <IconSlot><BlackTile $radius={3}><FaReact size={29} color="#5fd0f0" /></BlackTile></IconSlot>
          <IconSlot><Braces /></IconSlot>
          <IconSlot><MdExtension size={33} /></IconSlot>
          <Profile>K</Profile>
          <IconSlot><MdMoreVert size={40} /></IconSlot>
        </Toolbar>

        <BookmarkBar>
          {bookmarks.map((b) => (
            <Bookmark key={b.label} $width={b.width} $spacing={b.spacing}>
              <IconSlot>{b.icon}</IconSlot>
              {b.label}
            </Bookmark>
          ))}
          <Overflow>»</Overflow>
        </BookmarkBar>

        <Freehand>
          <Board>
            <BoardDrawing />
            {notes.map((n) => (
              <Note key={n.x} $x={n.x} $y={n.y} $size={n.size} $leading={n.leading}>
                {n.lines.map((line, i) => (
                  <Line key={i} $indent={line.indent}>
                    {line.runs.map(([text, spacing]) => <Run key={text} $spacing={spacing}>{text}</Run>)}
                  </Line>
                ))}
              </Note>
            ))}
          </Board>

          <Header>
            <Brand>
              <Logo>in</Logo>
              <Rule />
              <DocTitle>Mod 2 Project</DocTitle>
            </Brand>
            <StylePanel>
              <StyleOption $width={222} $pad={40}>
                <Swatch />
                Color
                <Caret $gap={12} />
              </StyleOption>
              <StyleOption $width={142} $pad={34}>
                <StrokeStyle />
                <Caret $gap={15} />
              </StyleOption>
            </StylePanel>
            <Actions>
              <Action $gap={58}><MoreDots /></Action>
              <Action $gap={48}><PencilUnderlined /></Action>
              <Action $gap={40}><RecordButton /></Action>
              <Avatar>K</Avatar>
              <ShareButton><ShareIcon />Share</ShareButton>
            </Actions>
          </Header>

          <ToolRail>
            {tools.map((icon, i) => <Tool key={i} $active={i === 0}>{icon}</Tool>)}
          </ToolRail>

          <Footer>
            <Action $gap={49}><HandIcon /></Action>
            <Action $gap={46}><KeyboardIcon /></Action>
            <Action $gap={44}><HelpIcon /></Action>
            <ZoomPill><Minus /><ZoomLevel>117%</ZoomLevel><Plus size={20} weight={3} color={INK} /></ZoomPill>
          </Footer>
        </Freehand>

        <Shelf>
          <Download $width={461} $pad={44}>
            <FileIcon><PngFile /></FileIcon>
            <FileName $spacing={-0.05}>download.png</FileName>
            <Chevron />
          </Download>
          <Download $width={454} $pad={37}>
            <FileIcon><PngFile /></FileIcon>
            <FileName $spacing={0.12}>3-Donut-Chart.png</FileName>
            <Chevron />
          </Download>
          <ShowAll>Show All</ShowAll>
          <CloseShelf><Cross size={19} weight={3.600} color="#6f7275" /></CloseShelf>
        </Shelf>
      </Window>
    </>
  );
}
